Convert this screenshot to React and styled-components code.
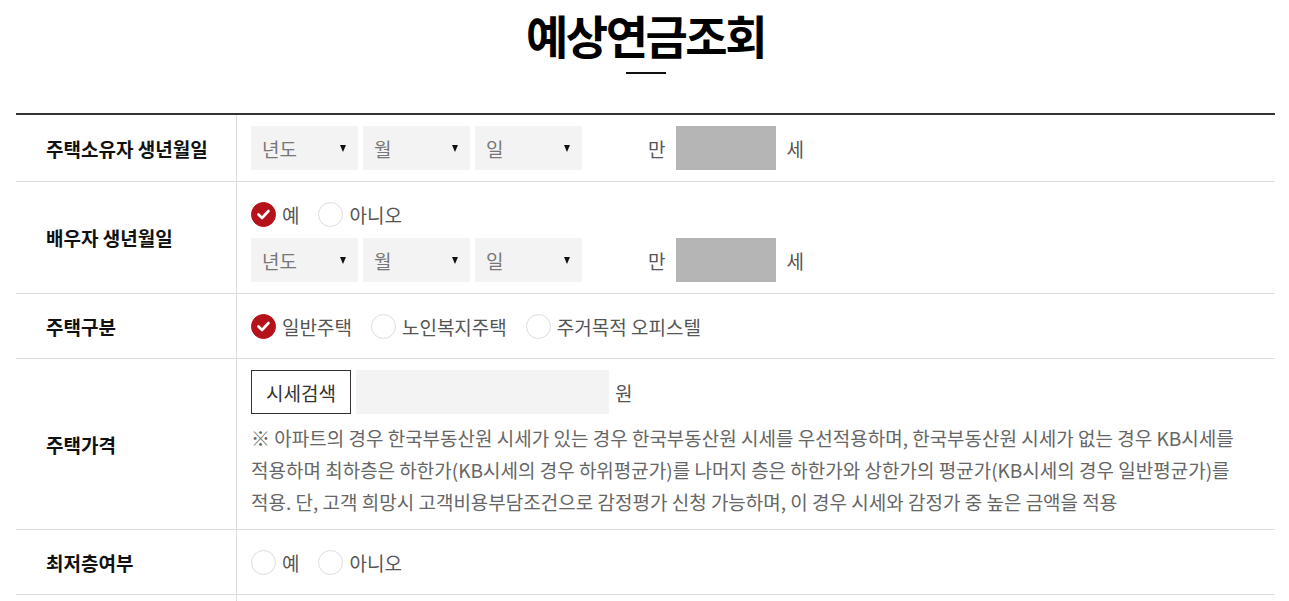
import styled, { createGlobalStyle } from "styled-components";

const GlobalStyle = createGlobalStyle`
  html, body {
    margin: 0;
    padding: 0;
    background: #fff;
  }
  body {
    font-family: "Noto Sans CJK KR", "Noto Sans", sans-serif;
    color: #555;
  }
`;

const DATE_PARTS = ["년도", "월", "일"];

export default function App() {
  return (
    <>
      <GlobalStyle />
      <Page>
        <TitleBlock>
          <Title>예상연금조회</Title>
          <TitleBar />
        </TitleBlock>

        <Table>
          <Row>
            <Label>주택소유자 생년월일</Label>
            <Cell>
              <DateLine />
            </Cell>
          </Row>

          <Row>
            <Label>배우자 생년월일</Label>
            <Cell $gap={3}>
              <RadioGroup options={["예", "아니오"]} checked={0} />
              <DateLine />
            </Cell>
          </Row>

          <Row>
            <Label>주택구분</Label>
            <Cell>
              <RadioGroup options={["일반주택", "노인복지주택", "주거목적 오피스텔"]} checked={0} />
            </Cell>
          </Row>

          <Row>
            <Label>주택가격</Label>
            <Cell $gap={8}>
              <Line>
                <SearchButton type="button">시세검색</SearchButton>
                <PriceInput />
                <Unit $gap={6}>원</Unit>
              </Line>
              <Note>
                ※ 아파트의 경우 한국부동산원 시세가 있는 경우 한국부동산원 시세를 우선적용하며, 한국부동산원 시세가 없는 경우 KB시세를
                적용하며 최하층은 하한가(KB시세의 경우 하위평균가)를 나머지 층은 하한가와 상한가의 평균가(KB시세의 경우 일반평균가)를
                적용. 단, 고객 희망시 고객비용부담조건으로 감정평가 신청 가능하며, 이 경우 시세와 감정가 중 높은 금액을 적용
              </Note>
            </Cell>
          </Row>

          <Row>
            <Label>최저층여부</Label>
            <Cell>
              <RadioGroup options={["예", "아니오"]} />
            </Cell>
          </Row>

          <Row>
            <Label />
            <Cell>
              <Spacer />
            </Cell>
          </Row>
        </Table>
      </Page>
    </>
  );
}

function DateLine() {
  return (
    <Line>
      {DATE_PARTS.map((txt) => (
        <Select key={txt}>
          {txt}
          <Caret />
        </Select>
      ))}
      <Unit $gap={61}>만</Unit>
      <AgeBox />
      <Unit $gap={10}>세</Unit>
    </Line>
  );
}

function RadioGroup({ options, checked }) {
  return (
    <Radios>
      {options.map((opt, i) => (
        <Option key={opt}>
          <Circle $on={i === checked}>
            {i === checked && (
              <svg width="25" height="25" viewBox="0 0 25 25">
                <polyline
                  points="7.5,12.5 11,16 17.5,9"
                  fill="none"
                  stroke="#fff"
                  strokeWidth="2.6"
                  strokeLinecap="round"
                  strokeLinejoin="round"
                />
              </svg>
            )}
          </Circle>
          {opt}
        </Option>
      ))}
    </Radios>
  );
}

// ─── Styled components ───

const Page = styled.div`
  padding: 0 14px 0 16px;
`;

const TitleBlock = styled.div`
  display: flex;
  flex-direction: column;
  align-items: center;
  padding-top: 4px;
  height: 113px;
  box-sizing: border-box;
`;

const Title = styled.h1`
  margin: 0;
  font-size: 46px;
  font-weight: 700;
  line-height: 60px;
  letter-spacing: -2.5px;
  color: #000;
`;

const TitleBar = styled.span`
  display: block;
  width: 40px;
  height: 2px;
  margin-top: 8px;
  background: #111;
`;

const Table = styled.div`
  border-top: 2px solid #333;
`;

const Row = styled.div`
  display: grid;
  grid-template-columns: 221px 1fr;
  border-bottom: 1px solid #ddd;
`;

const Label = styled.div`
  display: flex;
  align-items: center;
  padding-left: 30px;
  border-right: 1px solid #ddd;
  font-size: 19px;
  font-weight: 700;
  color: #111;
`;

const Cell = styled.div`
  display: flex;
  flex-direction: column;
  gap: ${({ $gap = 0 }) => $gap}px;
  padding: 11px 15px 11px 14px;
`;

const Line = styled.div`
  display: flex;
  align-items: center;
  height: 44px;
`;

const Select = styled.div`
  position: relative;
  width: 107px;
  height: 44px;
  margin-right: 5px;
  padding-left: 11px;
  box-sizing: border-box;
  display: flex;
  align-items: center;
  background: #f3f3f3;
  font-size: 19px;
  color: #777;
`;

const Caret = styled.span`
  position: absolute;
  right: 12px;
  top: 19px;
  width: 0;
  height: 0;
  border-left: 3.5px solid transparent;
  border-right: 3.5px solid transparent;
  border-top: 7px solid #111;
`;

const Unit = styled.span`
  margin-left: ${({ $gap }) => $gap}px;
  margin-right: 11px;
  font-size: 19px;
  color: #555;
`;

const AgeBox = styled.div`
  width: 100px;
  height: 44px;
  background: #b5b5b5;
`;

const Radios = styled.div`
  display: flex;
  align-items: center;
  height: 42px;
`;

const Option = styled.label`
  display: inline-flex;
  align-items: center;
  gap: 6px;
  margin-right: 19px;
  font-size: 19px;
  color: #555;
  cursor: pointer;
`;

const Circle = styled.span`
  width: 25px;
  height: 25px;
  border-radius: 50%;
  box-sizing: border-box;
  border: 1px solid ${({ $on }) => ($on ? "#b5121b" : "#ddd")};
  background: ${({ $on }) => ($on ? "#b5121b" : "#fff")};
  display: flex;
  align-items: center;
  justify-content: center;
  & svg {
    flex: none;
  }
`;

const SearchButton = styled.button`
  width: 100px;
  height: 44px;
  border: 1px solid #333;
  background: #fff;
  font-family: inherit;
  font-size: 19px;
  color: #333;
  padding: 0;
`;

const PriceInput = styled.div`
  width: 253px;
  height: 44px;
  margin-left: 5px;
  background: #f3f3f3;
`;

const Note = styled.p`
  margin: 0;
  font-size: 19px;
  line-height: 32px;
  color: #666;
  word-break: keep-all;
`;

const Spacer = styled.div`
  height: 42px;
`;
